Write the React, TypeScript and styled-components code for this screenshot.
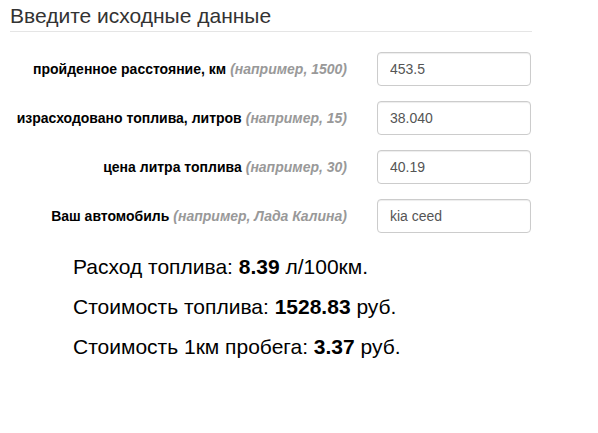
import React from "react";
import styled, { createGlobalStyle } from "styled-components";

const Global = createGlobalStyle`
  html, body { margin: 0; padding: 0; background: #fff; }
  body { font-family: "Liberation Sans", Arial, sans-serif; color: #333; }
`;

const Page = styled.div`
  width: 598px;
  height: 433px;
  padding: 0 66px 0 10px;
  box-sizing: border-box;
`;

const Legend = styled.div`
  font-size: 21px;
  line-height: 30px;
  color: #333;
  padding-top: 1px;
  border-bottom: 1px solid #e5e5e5;
  width: 522px;
`;

const Form = styled.div`
  display: grid;
  grid-template-columns: 337px 154px;
  column-gap: 30px;
  row-gap: 15px;
  margin-top: 20px;
`;

const Label = styled.label`
  display: flex;
  align-items: center;
  justify-content: flex-end;
  font-size: 14px;
  font-weight: bold;
  color: #000;
  white-space: nowrap;
`;

const Hint = styled.em`
  color: #999;
  margin-left: 4px;
  font-style: italic;
`;

const Input = styled.input`
  box-sizing: border-box;
  width: 154px;
  height: 34px;
  padding: 6px 12px;
  font-family: "Liberation Sans", Arial, sans-serif;
  font-size: 14px;
  color: #555;
  border: 1px solid #ccc;
  border-radius: 4px;
  box-shadow: inset 0 1px 1px rgba(0, 0, 0, 0.075);
  outline: none;
`;

const Results = styled.div`
  padding-left: 63px;
  margin-top: 24px;
  display: flex;
  flex-direction: column;
  gap: 20px;
`;

const Line = styled.div`
  font-size: 21px;
  line-height: 20px;
  color: #000;
`;

const rows = [
  { label: "пройденное расстояние, км", hint: "(например, 1500)", value: "453.5" },
  { label: "израсходовано топлива, литров", hint: "(например, 15)", value: "38.040" },
  { label: "цена литра топлива", hint: "(например, 30)", value: "40.19" },
  { label: "Ваш автомобиль", hint: "(например, Лада Калина)", value: "kia ceed" },
];

export default function App() {
  return (
    <Page>
      <Global />
      <Legend>Введите исходные данные</Legend>
      <Form>
        {rows.map((r) => (
          <React.Fragment key={r.label}>
            <Label>
              {r.label}
              <Hint>{r.hint}</Hint>
            </Label>
            <Input defaultValue={r.value} />
          </React.Fragment>
        ))}
      </Form>
      <Results>
        <Line>
          Расход топлива: <b>8.39</b> л/100км.
        </Line>
        <Line>
          Стоимость топлива: <b>1528.83</b> руб.
        </Line>
        <Line>
          Стоимость 1км пробега: <b>3.37</b> руб.
        </Line>
      </Results>
    </Page>
  );
}
